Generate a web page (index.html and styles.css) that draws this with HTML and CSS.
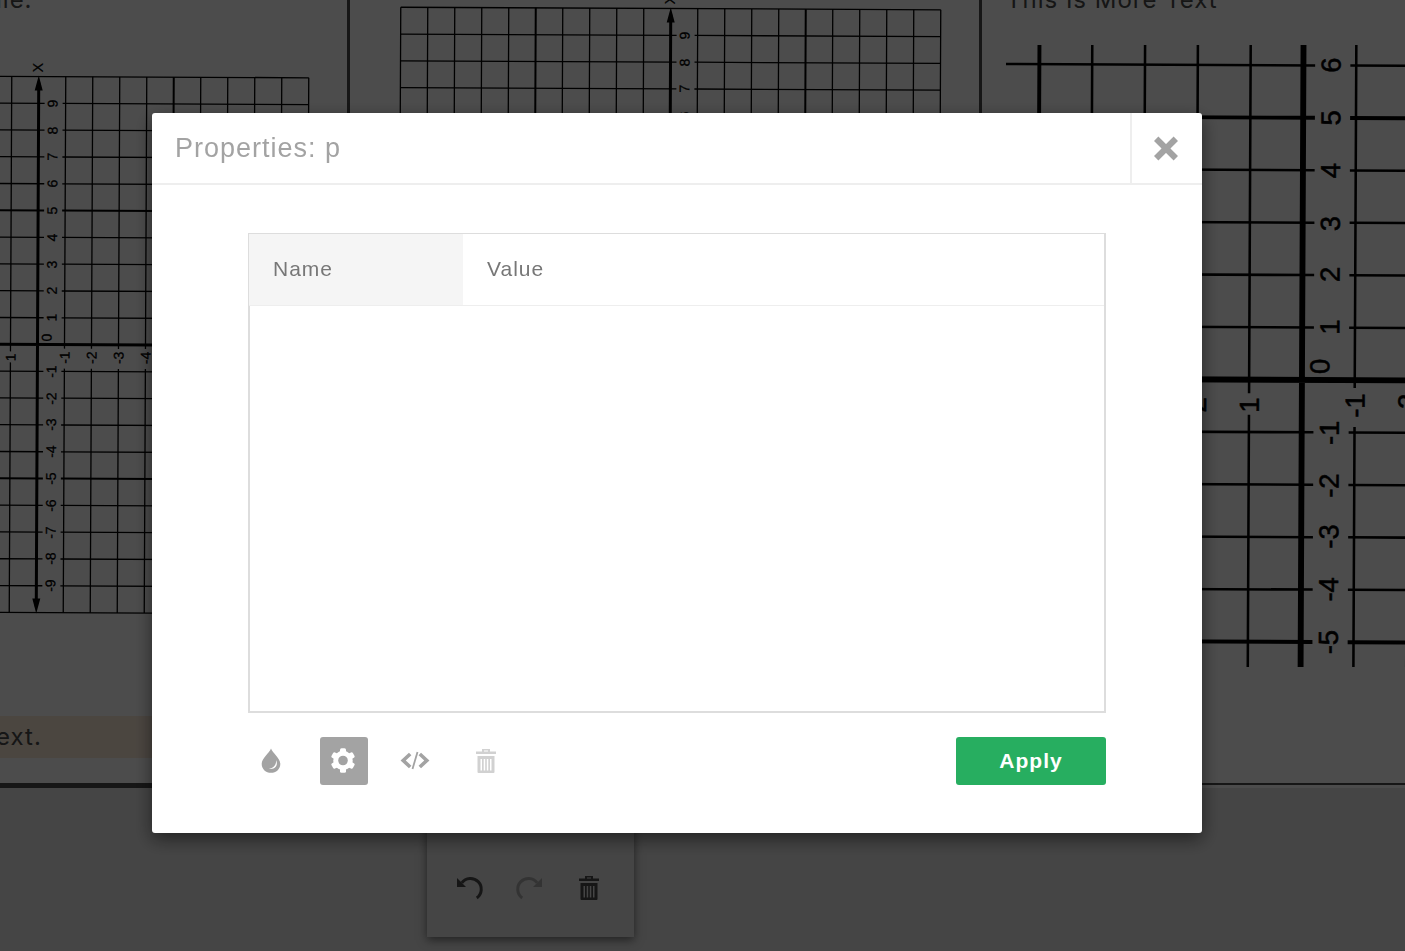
FILE: index.html
```html
<!DOCTYPE html>
<html lang="en">
<head>
<meta charset="utf-8">
<title>Properties</title>
<link rel="stylesheet" href="styles.css">
</head>
<body>
<svg class="defs" aria-hidden="true">
  <defs>
    <g id="plane">
      <g transform="rotate(0.27)">
        <path class="line" d="M-270 -268H270M-270 -241.2H6M24 -241.2H270M-270 -214.4H6M24 -214.4H270M-270 -187.6H6M24 -187.6H270M-270 -160.8H6M24 -160.8H270M-270 -107.2H6M24 -107.2H270M-270 -80.4H6M24 -80.4H270M-270 -53.6H6M24 -53.6H270M-270 -26.8H6M24 -26.8H270M-270 26.8H6M24 26.8H270M-270 53.6H6M24 53.6H270M-270 80.4H6M24 80.4H270M-270 107.2H6M24 107.2H270M-270 160.8H6M24 160.8H270M-270 187.6H6M24 187.6H270M-270 214.4H6M24 214.4H270M-270 241.2H6M24 241.2H270M-270 268H270"/>
        <path class="line" d="M-270 -268V268M-243 -268V7M-243 18V268M-216 -268V7M-216 18V268M-189 -268V7M-189 18V268M-162 -268V7M-162 18V268M-108 -268V7M-108 18V268M-81 -268V7M-81 18V268M-54 -268V7M-54 18V268M-27 -268V7M-27 18V268M27 -268V4M27 24V268M54 -268V4M54 24V268M81 -268V4M81 24V268M108 -268V4M108 24V268M162 -268V4M162 24V268M189 -268V4M189 24V268M216 -268V4M216 24V268M243 -268V4M243 24V268M270 -268V268"/>
        <path class="line bold" d="M-270 -134H6M24 -134H270M-270 134H6M24 134H270M-135 -268V7M-135 18V268M135 -268V4M135 24V268"/>
        <path class="line axis" d="M-270 0H270M0 -262V262"/>
        <path d="M0 -269L4 -254H-4ZM0 269L4 254H-4Z"/>
        <g class="label">
          <text transform="translate(4 -277) rotate(-90)">X</text>
          <text transform="translate(19 -241) rotate(-90)">9</text>
          <text transform="translate(19 -214) rotate(-90)">8</text>
          <text transform="translate(19 -188) rotate(-90)">7</text>
          <text transform="translate(19 -161) rotate(-90)">6</text>
          <text transform="translate(19 -134) rotate(-90)">5</text>
          <text transform="translate(19 -107) rotate(-90)">4</text>
          <text transform="translate(19 -80) rotate(-90)">3</text>
          <text transform="translate(19 -54) rotate(-90)">2</text>
          <text transform="translate(19 -27) rotate(-90)">1</text>
          <text transform="translate(14 -7) rotate(-90)">0</text>
          <text transform="translate(19 27) rotate(-90)">-1</text>
          <text transform="translate(19 54) rotate(-90)">-2</text>
          <text transform="translate(19 80) rotate(-90)">-3</text>
          <text transform="translate(19 107) rotate(-90)">-4</text>
          <text transform="translate(19 134) rotate(-90)">-5</text>
          <text transform="translate(19 161) rotate(-90)">-6</text>
          <text transform="translate(19 188) rotate(-90)">-7</text>
          <text transform="translate(19 214) rotate(-90)">-8</text>
          <text transform="translate(19 241) rotate(-90)">-9</text>
          <text transform="translate(-49 13) rotate(-90)">2</text>
          <text transform="translate(-22 13) rotate(-90)">1</text>
          <text transform="translate(32 13) rotate(-90)">-1</text>
          <text transform="translate(59 13) rotate(-90)">-2</text>
          <text transform="translate(86 13) rotate(-90)">-3</text>
          <text transform="translate(113 13) rotate(-90)">-4</text>
        </g>
      </g>
    </g>
    <g id="trash">
      <path d="M10 4.500V2H18V4.500H24V7H4V4.500ZM12 4.500H16V3.500H12Z" fill-rule="evenodd"/>
      <path d="M5.500 9H22.500V25Q22.500 26 21.500 26H6.500Q5.500 26 5.500 25ZM8.500 12V23.500H10V12ZM11.700 12V23.500H13.200V12ZM14.800 12V23.500H16.300V12ZM18 12V23.500H19.500V12Z" fill-rule="evenodd"/>
    </g>
    <g id="turn">
      <path d="M2 4V13H11Z"/>
      <path d="M6.800 8.800A10.800 10.800 0 1 1 21.800 24" fill="none" stroke="currentColor" stroke-width="3"/>
    </g>
  </defs>
</svg>

<div class="page">
  <main class="columns">
    <section class="column">
      <p class="heading">ile.</p>
      <svg class="chart chart-first" viewBox="-37.500 -284.500 347 556" preserveAspectRatio="xMinYMin slice"><use href="#plane"/></svg>
      <p class="caption">ext.</p>
    </section>
    <section class="column">
      <svg class="chart chart-second" viewBox="-319.500 -276.500 629 560" preserveAspectRatio="xMinYMin slice"><use href="#plane"/></svg>
    </section>
    <section class="column column-last">
      <p class="heading">This Is More Text</p>
      <svg class="chart chart-third" viewBox="-151.300 -171.200 204 318" preserveAspectRatio="xMinYMin slice"><use href="#plane"/></svg>
    </section>
  </main>
  <footer class="footer">
    <div class="toolbar">
      <button class="tool" type="button" aria-label="Undo"><svg class="icon" viewBox="0 0 28 28"><use href="#turn"/></svg></button>
      <button class="tool faded" type="button" aria-label="Redo"><svg class="icon" viewBox="0 0 28 28"><g transform="matrix(-1 0 0 1 29 0)"><use href="#turn"/></g></svg></button>
      <button class="tool" type="button" aria-label="Delete"><svg class="icon" viewBox="0 0 28 28"><use href="#trash"/></svg></button>
    </div>
  </footer>
</div>

<div class="overlay">
  <div class="dialog" role="dialog" aria-modal="true" aria-labelledby="dialog-title">
    <header class="dialog-header">
      <h1 class="dialog-title" id="dialog-title">Properties: p</h1>
      <button class="close" type="button" aria-label="Close">
        <svg class="icon" viewBox="1 0 28 28"><path d="M4.200 4.700L23.800 24.300M23.800 4.700L4.200 24.300" fill="none" stroke="currentColor" stroke-width="6.200"/></svg>
      </button>
    </header>
    <div class="dialog-body">
      <div class="table-box">
        <table class="properties">
          <thead><tr><th class="name" scope="col">Name</th><th class="value" scope="col">Value</th></tr></thead>
        </table>
      </div>
      <div class="actions">
        <button class="mode" type="button" aria-label="Style">
          <svg class="icon" viewBox="1 0 28 28"><path d="M14 1.500C15.500 6 23.300 11 23.300 17C23.300 22.300 19 25.800 14 25.800S4.700 22.300 4.700 17C4.700 11 12.500 6 14 1.500Z"/><path class="shine" d="M19.200 13C21.400 18.500 18 23 12 21.800C17 21.200 19.300 17.500 19.200 13Z"/></svg>
        </button>
        <button class="mode active" type="button" aria-label="Properties" aria-pressed="true">
          <svg class="icon" viewBox="0 0 28 28"><circle cx="13" cy="13.500" r="9.700"/><rect id="tooth" x="10" y="1.200" width="6" height="24.600" rx="1.500"/><use href="#tooth" transform="rotate(60 13 13.500)"/><use href="#tooth" transform="rotate(120 13 13.500)"/><circle class="hole" cx="13" cy="13.500" r="4.800"/></svg>
        </button>
        <button class="mode" type="button" aria-label="Code">
          <svg class="icon" viewBox="1 0 28 28"><path d="M9.200 7L2.200 13.500L9.200 20M18.800 7L25.800 13.500L18.800 20" fill="none" stroke="currentColor" stroke-width="3.600"/><path d="M16.500 5L11.500 22" stroke="currentColor" stroke-width="1.800"/></svg>
        </button>
        <button class="mode off" type="button" aria-label="Delete" disabled>
          <svg class="icon" viewBox="2 0 28 28"><use href="#trash"/></svg>
        </button>
        <button class="apply" type="button">Apply</button>
      </div>
    </div>
  </div>
</div>
</body>
</html>
```

FILE: styles.css
```css
* {
  box-sizing: border-box;
}

body {
  margin: 0;
  font-family: "Liberation Sans", Arial, sans-serif;
  letter-spacing: 1px;
}

button {
  display: flex;
  align-items: center;
  justify-content: center;
  padding: 0;
  border: 0;
  background: none;
}

.defs {
  position: absolute;
  width: 0;
  height: 0;
}

.icon {
  display: block;
  width: 28px;
  height: 28px;
  fill: currentColor;
  overflow: visible;
}

.page {
  display: flex;
  flex-direction: column;
  height: 100vh;
  overflow: hidden;
  background: #e6e6e6;
}

.columns {
  display: grid;
  grid-template-columns: 350fr 632fr 423fr;
  flex: none;
  background: #fff;
}

.column {
  min-width: 0;
  border-right: 3px solid #4a4a4a;
  border-bottom: 5px solid #4a4a4a;
  overflow: hidden;
}

.column-last {
  padding-left: 24px;
  border-right: 0;
  border-bottom-width: 2px;
  margin-bottom: 3px;
}

.heading,
.caption {
  margin: 0;
  font-family: Inter, sans-serif;
  font-size: 24px;
  color: #4a4a4a;
}

.heading {
  height: 45px;
  line-height: 0;
}

.column:first-child {
  text-indent: -4px;
}

.caption {
  margin: 100px 0 25px;
  line-height: 42px;
  background: #fae9d8;
}

.chart {
  display: block;
  width: 100%;
  text-indent: 0;
}

.chart-first {
  height: 556px;
  margin-top: 15px;
}

.chart-second {
  height: 560px;
}

.chart-third {
  height: 622px;
}

.line {
  fill: none;
  stroke: #000;
  stroke-width: 1.3px;
}

.bold {
  stroke-width: 2px;
}

.axis {
  stroke-width: 3px;
}

.label {
  font-family: "Liberation Sans", Arial, sans-serif;
  font-size: 14px;
  letter-spacing: 0;
  text-anchor: middle;
  stroke: #000;
  stroke-width: 0.3px;
}

.footer {
  display: flex;
  padding: 12px 0 14px 427px;
}

.toolbar {
  display: flex;
  align-items: flex-end;
  gap: 12px;
  height: 137px;
  padding: 0 21px 25px 18px;
  background: #e6e6e6;
  box-shadow: 0 3px 9px rgba(0, 0, 0, 0.5);
}

.tool {
  width: 48px;
  height: 48px;
  color: #4a4a4a;
}

.faded {
  color: #acacac;
}

.overlay {
  position: fixed;
  inset: 0;
  display: flex;
  align-items: center;
  justify-content: center;
  padding: 0 51px 5px 0;
  background: rgba(0, 0, 0, 0.7);
}

.dialog {
  width: 1050px;
  max-width: 100%;
  border-radius: 3px;
  background: #fff;
  box-shadow: 0 6px 18px rgba(0, 0, 0, 0.5);
}

.dialog-header {
  display: flex;
  justify-content: space-between;
  height: 72px;
  padding-left: 23px;
  border-bottom: 2px solid #eee;
}

.dialog-title {
  margin: 0;
  font-size: 27px;
  font-weight: 400;
  line-height: 70px;
  color: #a3a3a3;
}

.close {
  width: 72px;
  border-left: 2px solid #eee;
  color: #a3a3a3;
}

.dialog-body {
  padding: 48px 96px;
}

.table-box {
  height: 480px;
  border: 2px solid #ddd;
}

.properties {
  width: calc(100% + 1px);
  margin: -1px 0 0 -1px;
  border-collapse: separate;
  border-spacing: 0;
  table-layout: fixed;
  font-size: 21px;
  color: #777;
}

.properties th {
  height: 72px;
  padding: 0 24px 2px;
  border-bottom: 1px solid #eee;
  font-weight: 400;
  text-align: left;
}

.properties .name {
  width: 214px;
  background: #f5f5f5;
}

.properties .value {
  background: #fff;
}

.actions {
  display: flex;
  gap: 24px;
  margin-top: 24px;
}

.mode {
  width: 48px;
  height: 48px;
  border-radius: 3px;
  color: #a3a3a3;
}

.active {
  background: #a3a3a3;
  color: #fff;
}

.hole {
  fill: #a3a3a3;
}

.shine {
  fill: #fff;
}

.off {
  color: #d1d1d1;
}

.apply {
  width: 150px;
  height: 48px;
  margin-left: auto;
  border-radius: 3px;
  background: #27ae60;
  color: #fff;
  font-family: "Liberation Sans", Arial, sans-serif;
  font-size: 21px;
  font-weight: 700;
  letter-spacing: 1px;
}
```
